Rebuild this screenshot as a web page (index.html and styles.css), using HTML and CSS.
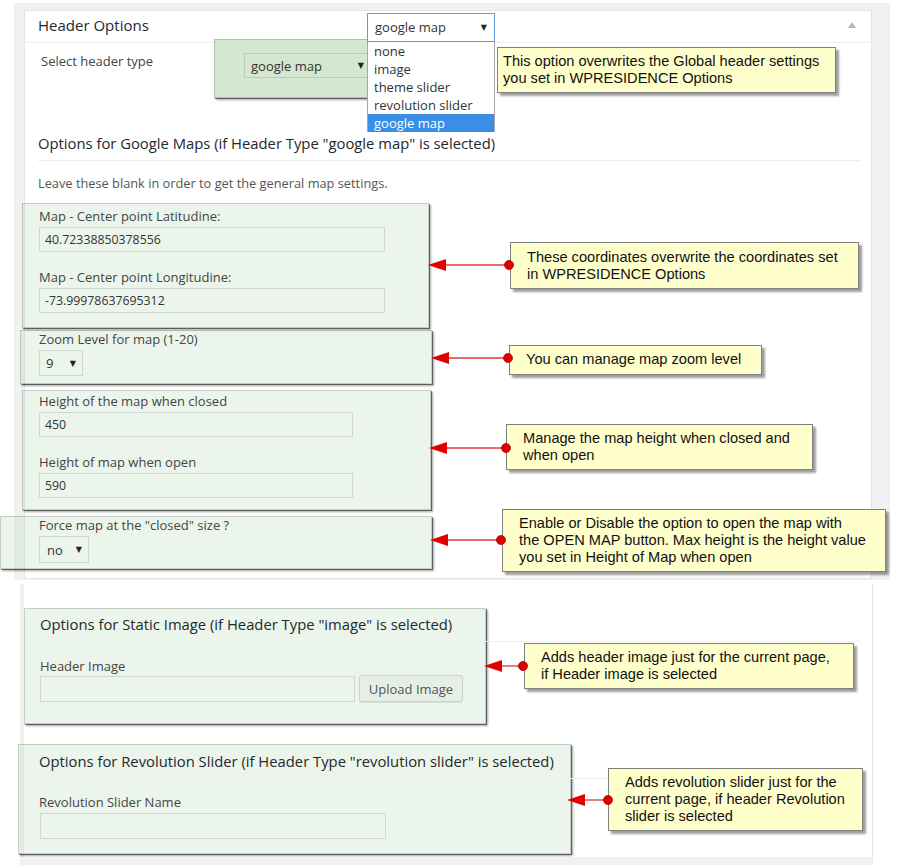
FILE: index.html
```html
<!DOCTYPE html>
<html lang="en">
<head>
<meta charset="utf-8">
<title>Header Options</title>
<link rel="stylesheet" href="styles.css">
</head>
<body>
<div class="page">
  <div class="top">
    <div class="panel">
      <div class="panel-head">
        <h2 class="panel-title">Header Options</h2>
        <span class="toggle"></span>
      </div>
      <div class="panel-body">
        <div class="row-type">
          <span class="type-lbl">Select header type</span>
          <div class="hl-strong type-box">
            <div class="select type-select"><span>google map</span><span class="caret">▼</span></div>
          </div>
        </div>
        <h3 class="sec-title gm-title">Options for Google Maps (if Header Type "google map" is selected)</h3>
        <p class="hint">Leave these blank in order to get the general map settings.</p>

        <div class="hl box-coords">
          <div class="field">
            <span class="lbl">Map - Center point Latitudine:</span>
            <div class="input w346">40.72338850378556</div>
          </div>
          <div class="field gap">
            <span class="lbl">Map - Center point Longitudine:</span>
            <div class="input w346">-73.99978637695312</div>
          </div>
        </div>

        <div class="hl box-zoom">
          <span class="lbl tight">Zoom Level for map (1-20)</span>
          <div class="select zoom-select"><span>9</span><span class="caret">▼</span></div>
        </div>

        <div class="hl box-height">
          <div class="field">
            <span class="lbl">Height of the map when closed</span>
            <div class="input w314">450</div>
          </div>
          <div class="field gap">
            <span class="lbl">Height of map when open</span>
            <div class="input w314">590</div>
          </div>
        </div>

        <div class="hl box-force">
          <span class="lbl tight force-lbl">Force map at the "closed" size ?</span>
          <div class="select force-select"><span>no</span><span class="caret">▼</span></div>
        </div>
      </div>
    </div>
  </div>

  <div class="lower">
    <div class="hl box-img">
      <h3 class="sec-title img-title">Options for Static Image (if Header Type "image" is selected)</h3>
      <span class="lbl img-lbl">Header Image</span>
      <div class="upload-row">
        <div class="input img-input"></div>
        <div class="btn">Upload Image</div>
      </div>
    </div>

    <div class="hl box-rev">
      <h3 class="sec-title rev-title">Options for Revolution Slider (if Header Type "revolution slider" is selected)</h3>
      <span class="lbl rev-lbl">Revolution Slider Name</span>
      <div class="input rev-input"></div>
    </div>
  </div>
  <div class="foot"></div>

  <!-- open dropdown of the header type select -->
  <div class="dd-select"><span>google map</span><span class="caret">▼</span></div>
  <ul class="dd-list">
    <li>none</li>
    <li>image</li>
    <li>theme slider</li>
    <li>revolution slider</li>
    <li class="on">google map</li>
  </ul>

  <!-- callout notes -->
  <div class="note n1">This option overwrites the Global header settings<br>you set in WPRESIDENCE Options</div>
  <div class="note n2">These coordinates overwrite the coordinates set<br>in WPRESIDENCE Options</div>
  <div class="note n3">You can manage map zoom level</div>
  <div class="note n4">Manage the map height when closed and<br>when open</div>
  <div class="note n5">Enable or Disable the option to open the map with<br>the OPEN MAP button. Max height is the height value<br>you set in Height of Map when open</div>
  <div class="note n6">Adds header image just for the current page,<br>if Header image is selected</div>
  <div class="note n7">Adds revolution slider just for the<br>current page, if header Revolution<br>slider is selected</div>

  <svg class="arrow a1" width="88" height="14" viewBox="0 0 88 14"><line x1="17" y1="7" x2="81" y2="7"/><polygon points="0,7 18,1 18,13"/><circle cx="81" cy="7" r="4.5"/></svg>
  <svg class="arrow a2" width="84" height="14" viewBox="0 0 84 14"><line x1="17" y1="7" x2="77" y2="7"/><polygon points="0,7 18,1 18,13"/><circle cx="77" cy="7" r="4.5"/></svg>
  <svg class="arrow a3" width="84" height="14" viewBox="0 0 84 14"><line x1="17" y1="7" x2="77" y2="7"/><polygon points="0,7 18,1 18,13"/><circle cx="77" cy="7" r="4.5"/></svg>
  <svg class="arrow a4" width="78" height="14" viewBox="0 0 78 14"><line x1="17" y1="7" x2="71" y2="7"/><polygon points="0,7 18,1 18,13"/><circle cx="71" cy="7" r="4.5"/></svg>
  <svg class="arrow a5" width="46" height="14" viewBox="0 0 46 14"><line x1="17" y1="7" x2="39" y2="7"/><polygon points="0,7 18,1 18,13"/><circle cx="39" cy="7" r="4.5"/></svg>
  <svg class="arrow a6" width="48" height="14" viewBox="0 0 48 14"><line x1="17" y1="7" x2="41" y2="7"/><polygon points="0,7 18,1 18,13"/><circle cx="41" cy="7" r="4.5"/></svg>
</div>
</body>
</html>
```
FILE: styles.css
```css
* { box-sizing: border-box; }

html, body {
  margin: 0;
  padding: 0;
  background: #fff;
}

body {
  font-family: "Open Sans", "DejaVu Sans", sans-serif;
  font-size: 13px;
  color: #444;
}

.page {
  position: relative;
  width: 906px;
  height: 865px;
  overflow: hidden;
}

/* ---------- top meta box ---------- */
.top {
  margin: 3px 16px 0 14px;
  background: #f1f1f1;
  padding: 7px 18px 1px 10px;
}

.panel {
  background: #fff;
  border: 1px solid #e5e5e5;
}

.panel-head {
  display: flex;
  align-items: center;
  height: 32px;
  padding: 0 15px 3px 13px;
  border-bottom: 1px solid #eee;
}

.panel-title {
  margin: 0;
  font-size: 15px;
  font-weight: 400;
  line-height: 20px;
  color: #23282d;
}

.toggle {
  margin-left: auto;
  width: 0;
  height: 0;
  border-left: 4px solid transparent;
  border-right: 4px solid transparent;
  border-bottom: 6px solid #b4b9be;
}

.panel-body {
  padding: 0 11px 9px 13px;
}

.row-type {
  display: flex;
  align-items: flex-start;
}

.type-lbl {
  width: 176px;
  flex-shrink: 0;
  padding-left: 3px;
  margin-top: 9px;
  line-height: 18px;
}

.hl {
  background: rgba(170, 210, 165, 0.22);
  border: 1px solid rgba(0, 0, 0, 0.16);
  box-shadow: 1px 1px 0 rgba(0, 0, 0, 0.45), 2px 2px 2px rgba(0, 0, 0, 0.35);
}

.hl-strong {
  background: #d4e7d0;
  border: 1px solid rgba(0, 0, 0, 0.16);
  box-shadow: 1px 1px 0 rgba(0, 0, 0, 0.45), 2px 2px 2px rgba(0, 0, 0, 0.35);
}

.type-box {
  margin-top: -4px;
  width: 156px;
  height: 59px;
  padding: 13px 0 0 29px;
}

.select {
  display: flex;
  align-items: center;
  justify-content: space-between;
  border: 1px solid rgba(0, 0, 0, 0.12);
  padding: 0 6px;
  font-size: 13px;
  color: #333;
}

.caret {
  font-family: "DejaVu Sans", sans-serif;
  font-size: 8px;
  color: #222;
}

.type-select {
  width: 126px;
  height: 25px;
  padding: 0 5px 0 6px;
}

.sec-title {
  margin: 0;
  font-size: 14.8px;
  font-weight: 400;
  line-height: 20px;
  color: #23282d;
  border-bottom: 1px solid #eee;
  white-space: nowrap;
}

.gm-title {
  margin-top: 35px;
  padding-bottom: 7px;
}

.hint {
  margin: 13px 0 0;
  line-height: 18px;
  font-size: 12.8px;
  color: #555;
}

.lbl {
  display: block;
  line-height: 18px;
  white-space: nowrap;
}

.lbl.tight {
  line-height: 16px;
}

.field.gap {
  margin-top: 16px;
}

.input {
  margin-top: 2px;
  height: 25px;
  border: 1px solid rgba(0, 0, 0, 0.12);
  padding: 0 5px;
  display: flex;
  align-items: center;
  font-size: 12.3px;
  color: #333;
}

.w346 { width: 346px; }
.w314 { width: 314px; }

.box-coords {
  margin-top: 11px;
  margin-left: -16px;
  width: 407px;
  padding: 3px 0 14px 16px;
}

.box-zoom {
  margin-top: 2px;
  margin-left: -18px;
  width: 412px;
  padding: 0 0 7px 18px;
}

.zoom-select {
  margin-top: 3px;
  width: 44px;
  height: 26px;
}

.box-height {
  margin-top: 6px;
  margin-left: -16px;
  width: 409px;
  padding: 1px 0 11px 16px;
}

.box-force {
  margin-top: 6px;
  margin-left: -38px;
  width: 432px;
  padding: 0 0 5px 38px;
}

.force-lbl {
  line-height: 15px;
}

.force-select {
  margin-top: 3px;
  width: 50px;
  height: 27px;
  padding: 0 6px 0 7px;
}

/* ---------- lower meta box ---------- */
.lower {
  margin: 4px 0 0 20px;
  width: 853px;
  height: 273px;
  border-left: 4px solid #f1f1f1;
  border-right: 1px solid #e5e5e5;
  padding-top: 24px;
}

.box-img {
  width: 462px;
  padding: 5px 0 21px 15px;
}

.img-title {
  width: 820px;
  padding-bottom: 7px;
}

.img-lbl {
  margin-top: 15px;
}

.upload-row {
  display: flex;
  align-items: flex-start;
}

.img-input {
  margin-top: 1px;
  width: 315px;
  height: 26px;
}

.btn {
  margin-left: 4px;
  width: 104px;
  height: 27px;
  border: 1px solid #cdd2cd;
  border-radius: 3px;
  background: rgba(0, 0, 0, 0.025);
  box-shadow: 0 1px 0 rgba(0, 0, 0, 0.08);
  display: flex;
  align-items: center;
  justify-content: center;
  font-size: 13px;
  color: #555;
}

.box-rev {
  margin-top: 20px;
  margin-left: -6px;
  width: 553px;
  padding: 6px 0 14px 20px;
}

.rev-title {
  width: 821px;
  padding-bottom: 7px;
}

.rev-lbl {
  margin-top: 14px;
}

.rev-input {
  margin-top: 2px;
  margin-left: 1px;
  width: 346px;
  height: 26px;
}

.foot {
  margin-left: 20px;
  width: 853px;
  height: 12px;
  background: #f1f1f1;
}

/* ---------- open dropdown ---------- */
.dd-select {
  position: absolute;
  left: 367px;
  top: 13px;
  width: 128px;
  height: 29px;
  border: 1px solid #5b9dd9;
  background: #fff;
  padding: 0 7px 1px;
  display: flex;
  align-items: center;
  justify-content: space-between;
  font-size: 13px;
  color: #333;
}

.dd-list {
  position: absolute;
  left: 367px;
  top: 42px;
  width: 128px;
  margin: 0;
  padding: 0;
  list-style: none;
  background: #fff;
  border-left: 1px solid #a7a7a7;
  border-right: 1px solid #a7a7a7;
}

.dd-list li {
  height: 18px;
  line-height: 18px;
  padding-left: 6px;
  font-size: 13px;
  color: #333;
}

.dd-list li.on {
  background: #3b8ee6;
  color: #fff;
}

/* ---------- callout notes ---------- */
.note {
  position: absolute;
  background: #ffffcc;
  border: 1px solid #7f7f7f;
  box-shadow: 3px 3px 2px rgba(0, 0, 0, 0.38);
  font-family: "Liberation Sans", Arial, sans-serif;
  font-size: 14.6px;
  line-height: 17px;
  color: #111;
  white-space: nowrap;
  padding: 5px 0 0 16px;
}

.n1 { left: 497px; top: 47px; width: 339px; height: 46px; padding-left: 5px; }
.n2 { left: 510px; top: 242px; width: 349px; height: 47px; padding-top: 6px; }
.n3 { left: 509px; top: 345px; width: 253px; height: 30px; padding-top: 5px; }
.n4 { left: 506px; top: 424px; width: 307px; height: 46px; }
.n5 { left: 502px; top: 509px; width: 384px; height: 63px; }
.n6 { left: 524px; top: 643px; width: 330px; height: 46px; }
.n7 { left: 608px; top: 768px; width: 255px; height: 63px; }

.arrow {
  position: absolute;
  overflow: visible;
}

.arrow line {
  stroke: #e03a3a;
  stroke-width: 1.3;
}

.arrow polygon {
  fill: #e00000;
}

.arrow circle {
  fill: #e00000;
  stroke: #a80000;
  stroke-width: 0.8;
}

.a1 { left: 428px; top: 258px; }
.a2 { left: 431px; top: 351px; }
.a3 { left: 429px; top: 441px; }
.a4 { left: 430px; top: 533px; }
.a5 { left: 484px; top: 659px; }
.a6 { left: 567px; top: 793px; }
```
